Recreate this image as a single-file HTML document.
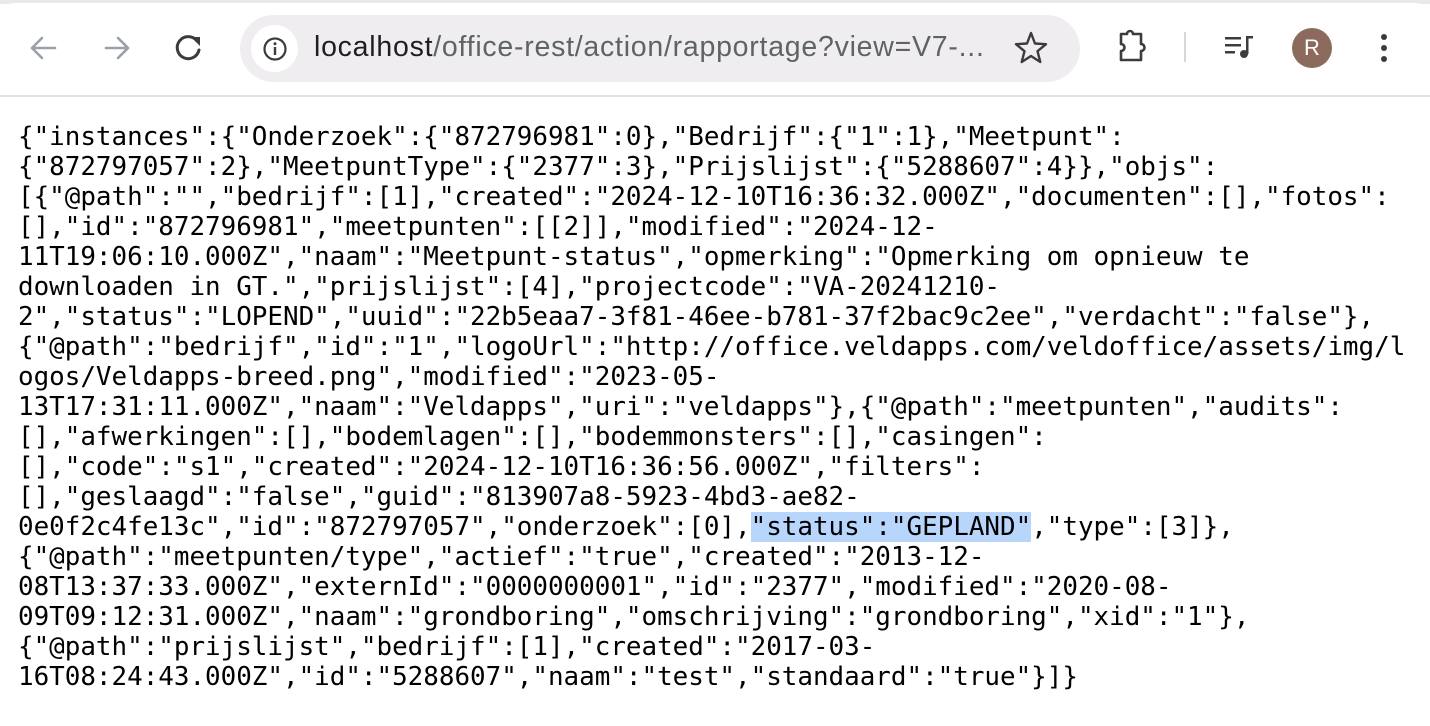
<!DOCTYPE html>
<html><head><meta charset="utf-8"><style>
body{margin:0;width:1430px;height:726px;background:#fff;overflow:hidden;position:relative;font-family:"Liberation Sans",sans-serif}
.top{position:absolute;left:0;top:0;width:1430px;height:4px;background:#e9e9ec}
.bar{position:absolute;left:0;top:3px;width:1430px;height:92px;background:#fff;border-top-left-radius:14px;border-top-right-radius:14px}
.sep{position:absolute;left:0;top:95px;width:1430px;height:2px;background:#e3e3e3}
.url{position:absolute;left:240px;top:15px;width:840px;height:67px;background:#efedf0;border-radius:34px}
.info{position:absolute;left:251px;top:25px;width:47px;height:47px;background:#fff;border-radius:50%}
.utext{position:absolute;left:314px;top:31px;font-size:28.5px;color:#5f6368;white-space:nowrap;letter-spacing:0.75px}
.utext b{font-weight:normal;color:#1f1f1f}
pre{position:absolute;left:18px;top:122px;margin:0;font-family:"DejaVu Sans Mono","Liberation Mono",monospace;font-size:25.9px;line-height:30px;color:#000}
.hl{background:#b8d6fb}
.av{position:absolute;left:1292px;top:28px;width:40px;height:40px;border-radius:50%;background:#8d6a5e;color:#fff;font-size:22px;text-align:center;line-height:40px}
</style></head><body>
<div class="top"></div><div class="bar"></div><div class="sep"></div>
<svg style="position:absolute;left:0;top:0" width="1430" height="95">
<g fill="none" stroke="#9aa0a6" stroke-width="2.6" stroke-linecap="round" stroke-linejoin="round">
<path d="M55 48H32M42 38L32 48L42 58"/>
<path d="M106 48H128M118 38L128 48L118 58"/>
</g>
<path d="M197 41A11 11 0 1 0 199 50" fill="none" stroke="#3c3c3c" stroke-width="3" stroke-linecap="round"/>
<path d="M191 37L200 37L200 46Z" fill="#3c3c3c"/>
</svg>
<div class="url"></div><div class="info"></div>
<svg style="position:absolute;left:262px;top:36px" width="26" height="26"><circle cx="13" cy="13" r="10.5" fill="none" stroke="#3c3c3c" stroke-width="2.2"/><rect x="11.8" y="11" width="2.4" height="8" fill="#3c3c3c"/><circle cx="13" cy="7.8" r="1.5" fill="#3c3c3c"/></svg>
<div class="utext"><b>localhost</b>/office-rest/action/rapportage?view=V7-...</div>
<svg style="position:absolute;left:0;top:0" width="1430" height="95">
<path d="M1031 33L1035 43.5L1046 44.2L1037.5 51.2L1040.3 62L1031 56L1021.7 62L1024.5 51.2L1016 44.2L1027 43.5Z" fill="none" stroke="#3c3c3c" stroke-width="2.4" stroke-linejoin="round"/>
<path d="M1121 34H1127A3 3 0 0 1 1133 34H1141V44A3.5 3.5 0 0 1 1141 51V60H1121V51A3.5 3.5 0 0 0 1121 44Z" fill="none" stroke="#3c3c3c" stroke-width="2.6" stroke-linejoin="round"/>
<rect x="1184" y="32" width="2" height="30" fill="#d7d7d7"/>
<g fill="#3c3c3c"><rect x="1225" y="37" width="16" height="2.5"/><rect x="1225" y="44" width="16" height="2.5"/><rect x="1225" y="51" width="10" height="2.5"/><rect x="1246" y="36" width="2.5" height="18"/><rect x="1246" y="36" width="7" height="2.5"/><circle cx="1244" cy="54" r="4"/>
<circle cx="1384" cy="37" r="3"/><circle cx="1384" cy="48" r="3"/><circle cx="1384" cy="59" r="3"/></g>
</svg>
<div class="av">R</div>
<pre>{"instances":{"Onderzoek":{"872796981":0},"Bedrijf":{"1":1},"Meetpunt":
{"872797057":2},"MeetpuntType":{"2377":3},"Prijslijst":{"5288607":4}},"objs":
[{"@path":"","bedrijf":[1],"created":"2024-12-10T16:36:32.000Z","documenten":[],"fotos":
[],"id":"872796981","meetpunten":[[2]],"modified":"2024-12-
11T19:06:10.000Z","naam":"Meetpunt-status","opmerking":"Opmerking om opnieuw te
downloaden in GT.","prijslijst":[4],"projectcode":"VA-20241210-
2","status":"LOPEND","uuid":"22b5eaa7-3f81-46ee-b781-37f2bac9c2ee","verdacht":"false"},
{"@path":"bedrijf","id":"1","logoUrl":"http://office.veldapps.com/veldoffice/assets/img/l
ogos/Veldapps-breed.png","modified":"2023-05-
13T17:31:11.000Z","naam":"Veldapps","uri":"veldapps"},{"@path":"meetpunten","audits":
[],"afwerkingen":[],"bodemlagen":[],"bodemmonsters":[],"casingen":
[],"code":"s1","created":"2024-12-10T16:36:56.000Z","filters":
[],"geslaagd":"false","guid":"813907a8-5923-4bd3-ae82-
0e0f2c4fe13c","id":"872797057","onderzoek":[0],<span class="hl">"status":"GEPLAND"</span>,"type":[3]},
{"@path":"meetpunten/type","actief":"true","created":"2013-12-
08T13:37:33.000Z","externId":"0000000001","id":"2377","modified":"2020-08-
09T09:12:31.000Z","naam":"grondboring","omschrijving":"grondboring","xid":"1"},
{"@path":"prijslijst","bedrijf":[1],"created":"2017-03-
16T08:24:43.000Z","id":"5288607","naam":"test","standaard":"true"}]}</pre>
</body></html>
